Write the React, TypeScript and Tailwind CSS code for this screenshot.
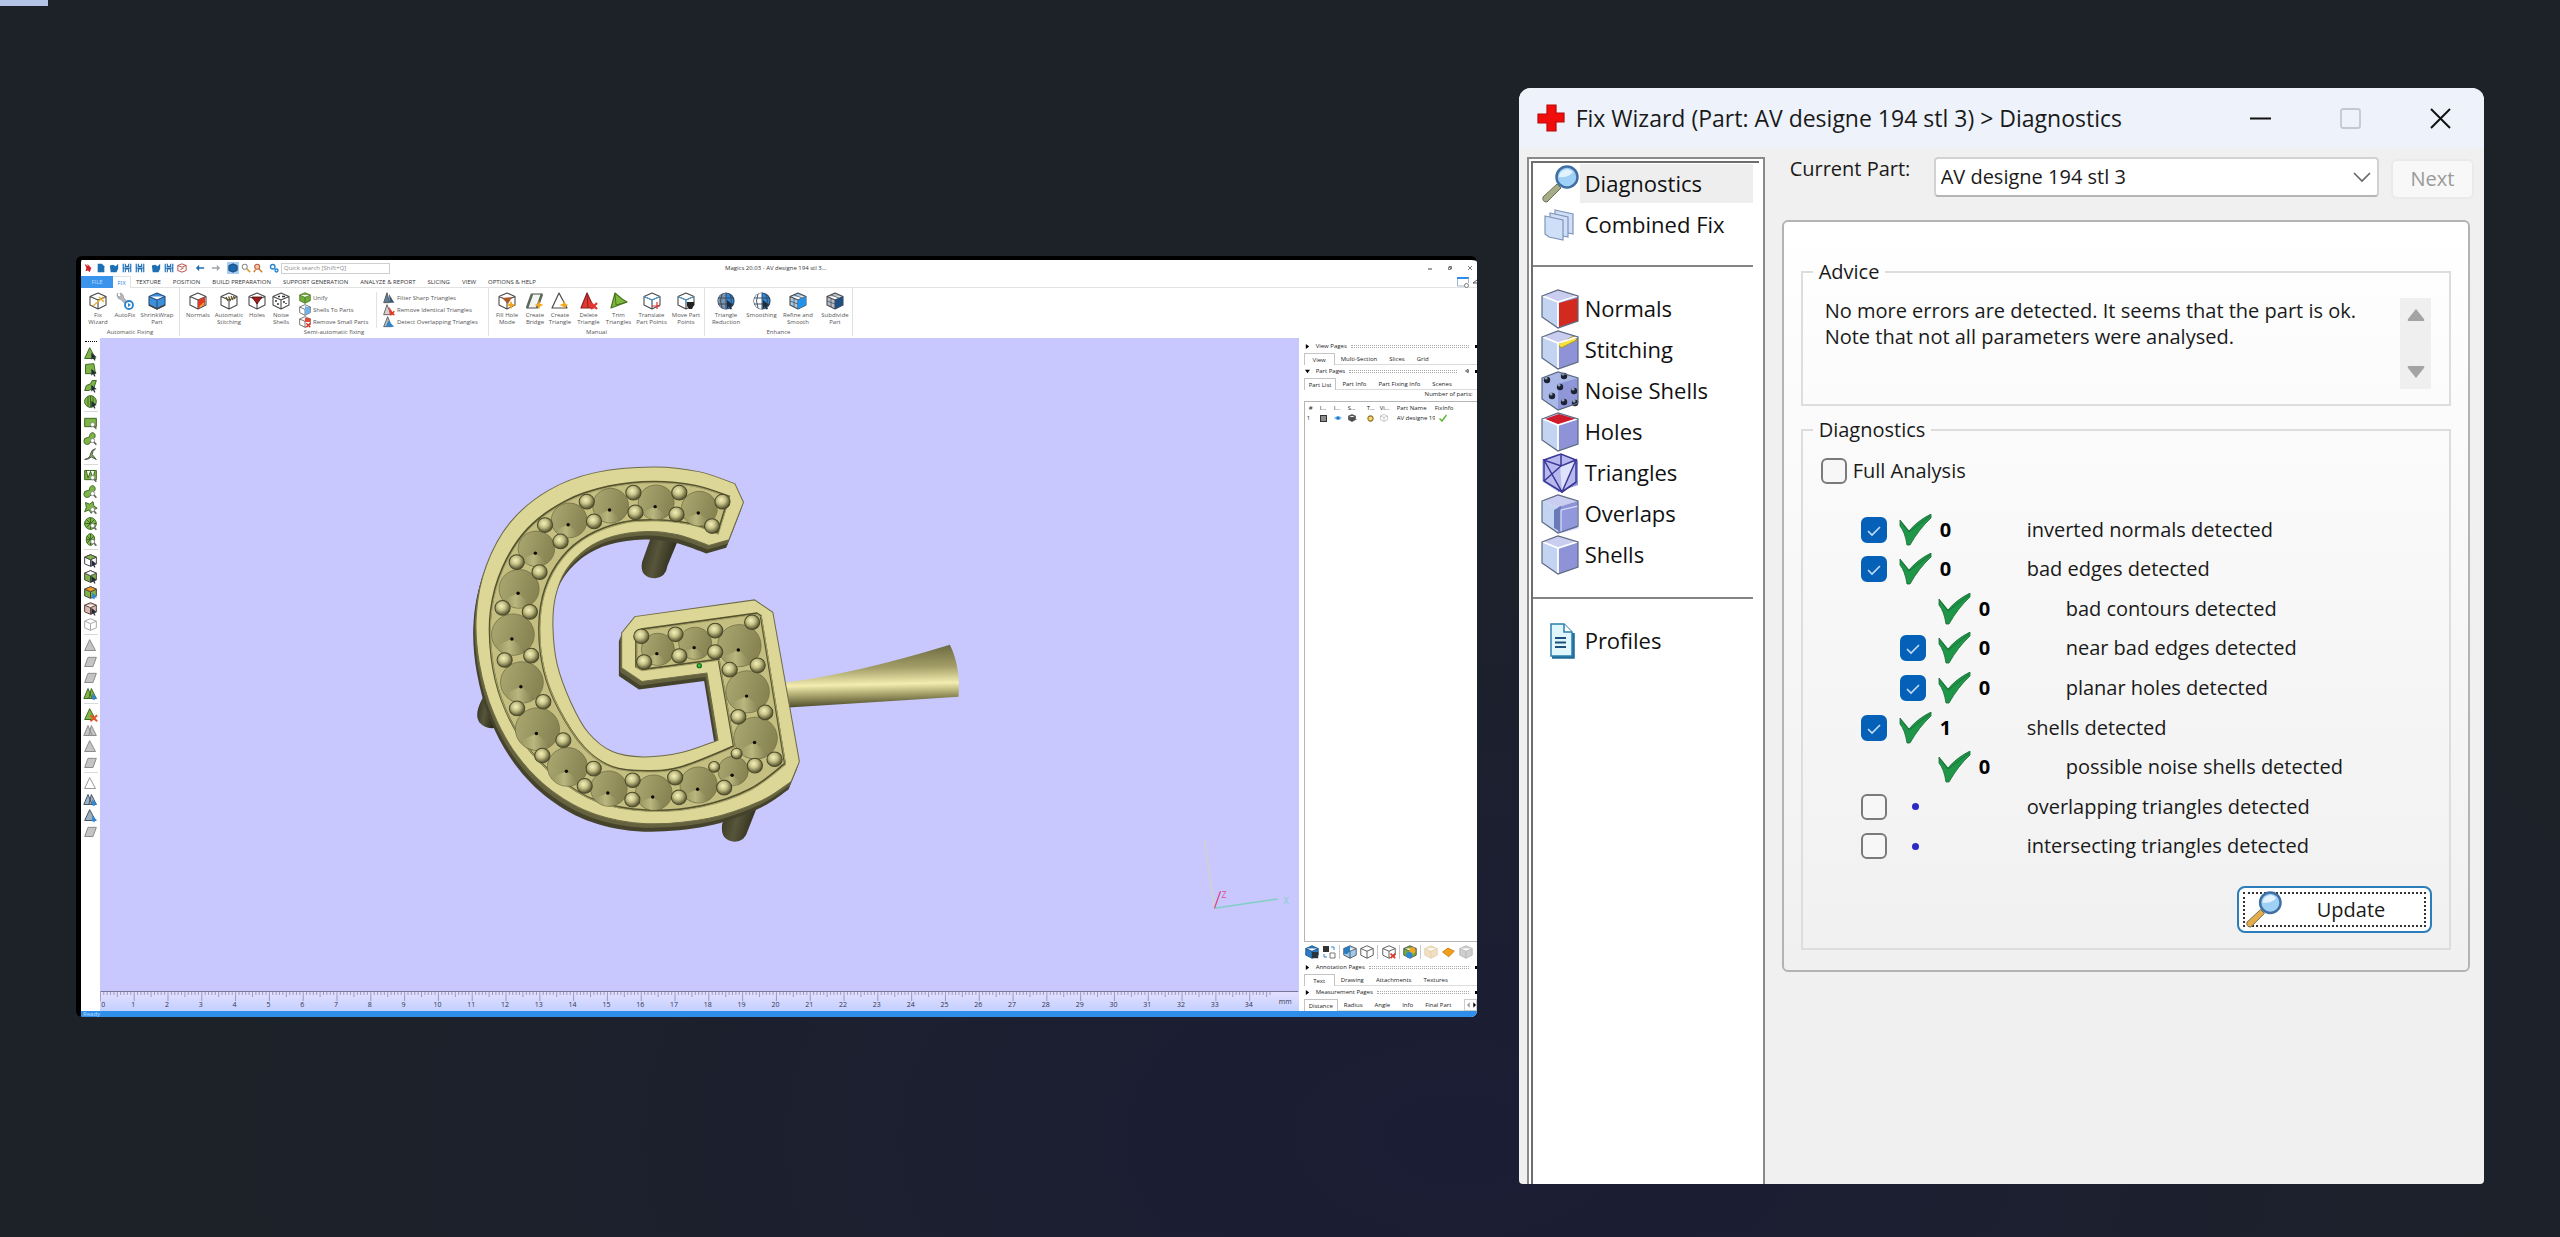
import { useState } from "react";
import type { ReactNode } from "react";

/* ---------- helpers ---------- */

type Pt = [number, number];

// Catmull-Rom through the given points, returned as cubic segments
function spline(points: Pt[]) {
  let d = "";
  for (let i = 0; i < points.length - 1; i++) {
    const p0 = points[i - 1] ?? points[i];
    const p1 = points[i];
    const p2 = points[i + 1];
    const p3 = points[i + 2] ?? p2;
    d += `C${p1[0] + (p2[0] - p0[0]) / 6} ${p1[1] + (p2[1] - p0[1]) / 6} ${p2[0] - (p3[0] - p1[0]) / 6} ${p2[1] - (p3[1] - p1[1]) / 6} ${p2[0]} ${p2[1]}`;
  }
  return d;
}

const FACE =
  "M855 130L880 186L838 298L780 315" +
  spline([[780, 315], [690, 283], [600, 273], [500, 288], [425, 325], [365, 390], [335, 470], [328, 560], [340, 670], [380, 785], [430, 875], [500, 932], [590, 948], [700, 935], [806, 898]]) +
  "L774 697L585 722L527 682L527 577L565 528L912 478L965 515L1042 962L1018 1022" +
  spline([[1018, 1022], [930, 1080], [780, 1132], [600, 1148], [450, 1120], [325, 1050], [225, 945], [155, 815], [115, 670], [106, 520], [135, 375], [205, 245], [315, 150], [450, 97], [620, 80], [750, 94], [855, 130]]) +
  "Z";

const CHANNEL =
  "M838 168L805 278" +
  spline([[805, 278], [730, 251], [630, 239], [530, 246], [430, 285], [355, 350], [305, 445], [288, 560], [302, 690], [345, 805], [420, 922], [500, 978], [600, 990], [700, 978], [852, 916]]) +
  "L808 656L585 687L569 678L569 580L585 566L918 518L930 526L1000 968" +
  spline([[1000, 968], [900, 1044], [760, 1094], [600, 1108], [455, 1080], [335, 1005], [240, 900], [180, 780], [150, 650], [148, 510], [183, 380], [255, 265], [365, 182], [490, 138], [620, 124], [740, 136], [838, 168]]) +
  "Z";

const STONES: [number, number, number][] = [
  [495, 196, 52], [627, 186, 52], [752, 205, 52], [375, 240, 52], [280, 325, 53],
  [230, 445, 58], [212, 582, 62], [238, 725, 62], [283, 865, 64], [370, 978, 58],
  [490, 1043, 53], [620, 1055, 53], [750, 1032, 54], [850, 990, 44], [915, 892, 63],
  [892, 753, 63], [868, 615, 63], [740, 608, 48], [632, 626, 48],
];

const BEADS: [number, number, number?][] = [
  [561, 157], [694, 157], [819, 184], [789, 257], [686, 222], [567, 216], [426, 184],
  [447, 243], [305, 254], [350, 303], [223, 365], [289, 395], [182, 502], [261, 514],
  [188, 658], [265, 645], [224, 803], [300, 783], [297, 944], [358, 898], [420, 1035],
  [446, 983], [559, 1018], [558, 1076], [682, 1010], [693, 1069], [795, 978, 16],
  [824, 1040], [860, 938, 16], [913, 974], [970, 955], [943, 815], [865, 828],
  [840, 687], [921, 674], [905, 545], [798, 570], [798, 634], [683, 581], [694, 646],
  [584, 587], [592, 664],
];

function Viewport() {
  return (
    <svg viewBox="0 0 1196 652" className="block h-auto w-full bg-[#c8c8ff]" role="img" aria-label="Part view">
      <defs>
        <radialGradient id="bead" cx="0.42" cy="0.38" r="0.62">
          <stop offset="0" stopColor="#f4f0bd" />
          <stop offset="0.45" stopColor="#c6c286" />
          <stop offset="1" stopColor="#4f4d2c" />
        </radialGradient>
        <linearGradient id="stone" x1="0" y1="0" x2="1" y2="0.25">
          <stop offset="0" stopColor="#aca871" />
          <stop offset="0.5" stopColor="#9b9763" />
          <stop offset="1" stopColor="#898553" />
        </linearGradient>
        <linearGradient id="stoneLow" x1="0" y1="0" x2="1" y2="0">
          <stop offset="0" stopColor="#9a9662" />
          <stop offset="0.45" stopColor="#bab67e" />
          <stop offset="1" stopColor="#7f7b4d" />
        </linearGradient>
        <linearGradient id="spike" x1="0" y1="0" x2="0.06" y2="1">
          <stop offset="0.05" stopColor="#6b683f" />
          <stop offset="0.4" stopColor="#a39e67" />
          <stop offset="0.66" stopColor="#f3edb0" />
          <stop offset="0.82" stopColor="#a7a26a" />
          <stop offset="1" stopColor="#4f4c2c" />
        </linearGradient>
        <linearGradient id="post" x1="0" y1="0" x2="1" y2="0.3">
          <stop offset="0" stopColor="#33311f" />
          <stop offset="0.5" stopColor="#57553a" />
          <stop offset="1" stopColor="#2b2a1a" />
        </linearGradient>
      </defs>
      <g transform="translate(339 102) scale(0.3444 0.3333)">
        <path d="M612 290L586 365Q578 412 625 413Q655 410 660 375L690 300Z" fill="url(#post)" />
        <path d="M832 1110L818 1150Q812 1200 855 1202Q885 1200 892 1170L930 1070Z" fill="url(#post)" />
        <path d="M125 770Q98 820 115 845Q135 868 165 860Z" fill="url(#post)" />
        <path d="M1000 725Q1200 700 1478 612Q1510 680 1503 768Q1250 785 1010 800Z" fill="url(#spike)" />
        {[24, 18, 12, 6].map((n) => (
          <path key={n} d={FACE} transform={`translate(${-n / 3} ${n})`} fill={n > 12 ? "#45432b" : "#65623f"} />
        ))}
        <path d={FACE} fill="#dcd796" stroke="#6f6c48" strokeWidth="3" />
        <path d={CHANNEL} fill="#c4bf80" stroke="#55522f" strokeWidth="6" />
        <path d={CHANNEL} fill="none" stroke="#a39f66" strokeWidth="3" transform="translate(2 3)" />
        {STONES.map(([x, y, r]) => (
          <g key={`${x}-${y}`}>
            <circle cx={x} cy={y} r={r} fill="url(#stone)" stroke="#6a6740" strokeWidth="2" />
            <path d={`M${x - 3} ${y + 13}L${x - r * 0.8} ${y + r * 0.56}A${r} ${r} 0 0 0 ${x + r * 0.6} ${y + r * 0.78}Z`} fill="url(#stoneLow)" />
            <circle cx={x - 3} cy={y + 13} r="5" fill="#0c0c04" />
          </g>
        ))}
        {BEADS.map(([x, y, r = 22]) => (
          <circle key={`${x}-${y}`} cx={x} cy={y} r={r} fill="url(#bead)" stroke="#4c4a2b" strokeWidth="3" />
        ))}
        <circle cx="752" cy="675" r="6" fill="#4fb84a" stroke="#14781a" strokeWidth="4" />
      </g>
      <path d="M1112 569L1102 501" stroke="#d0d0d6" strokeWidth="2" />
      <path d="M1112 569L1175 559.700" stroke="#7fcfc2" strokeWidth="1.400" />
      <path d="M1112 569L1118 552" stroke="#d8457f" strokeWidth="1.200" />
      <text x="1119" y="559" className="fill-[#e0568c] font-['Open_Sans',sans-serif] text-[9px]">Z</text>
      <text x="1181" y="565" className="fill-[#7fd0c4] font-['Open_Sans',sans-serif] text-[9px]">X</text>
    </svg>
  );
}

function Ruler() {
  const unit = 33.75;
  const ticks = Array.from({ length: 347 }, (_, i) => i);
  const marks = Array.from({ length: 35 }, (_, i) => i);
  return (
    <svg viewBox="0 0 1196 20" className="block h-auto w-full bg-linear-to-b from-[#e6e0ff] to-[#c2d0ff]" role="img" aria-label="Ruler">
      <path d="M0 0.500H1196" stroke="#77779a" />
      <path
        d={ticks.map((i) => `M${i * (unit / 10)} 1V${i % 10 === 0 ? 10 : i % 5 === 0 ? 6 : 4}`).join("")}
        stroke="#7c7ca4"
        strokeWidth="0.700"
      />
      {marks.map((n) => (
        <text key={n} x={n === 0 ? 3 : n * unit - 1} y="16" textAnchor="middle" className="fill-[#33334d] font-['Open_Sans',sans-serif] text-[7px]">
          {n}
        </text>
      ))}
      <text x="1183" y="13" textAnchor="middle" className="fill-[#33334d] font-['Open_Sans',sans-serif] text-[7px]">mm</text>
    </svg>
  );
}

/* ---------- ribbon icons ---------- */

const CUBE = "M9 1L17 4.500V13L9 17L1 13V4.500ZM1 4.500L9 8L17 4.500M9 8V17";

function CubeIcon({ children, fill = "#fff", stroke = "#4a4a4a", size = "size-4.5" }: { children?: ReactNode; fill?: string; stroke?: string; size?: string }) {
  return (
    <svg viewBox="0 0 18 18" className={`${size} shrink-0`} aria-hidden="true">
      <path d={CUBE} fill={fill} stroke={stroke} strokeWidth="1.100" strokeLinejoin="round" />
      {children}
    </svg>
  );
}

function TriIcon({ fill = "#fff", stroke = "#4a4a4a", d = "M9 1L17 16H2Z", size = "size-4.5", children }: { fill?: string; stroke?: string; d?: string; size?: string; children?: ReactNode }) {
  return (
    <svg viewBox="0 0 18 18" className={`${size} shrink-0`} aria-hidden="true">
      <path d={d} fill={fill} stroke={stroke} strokeWidth="1.200" strokeLinejoin="round" />
      {children}
    </svg>
  );
}

const spark = <path d="M13 8.500L14.200 11.800L17.500 13L14.200 14.200L13 17.500L11.800 14.200L8.500 13L11.800 11.800Z" fill="#f2a71b" />;
const cursor = <path d="M10 8L16.500 13.500L13.500 13.800L15 17L13.500 17.500L12 14.500L10 16.500Z" fill="#222c3a" />;
const cross = <path d="M11 11L17 17M17 11L11 17" stroke="#e2372b" strokeWidth="2.200" />;
const magnify = (
  <g>
    <path d="M12.500 12.500L16 16.500" stroke="#666" strokeWidth="2" />
    <circle cx="11.500" cy="11.500" r="2.500" fill="#fff" stroke="#888" />
  </g>
);

type Tool = { label: string[]; icon: ReactNode; width: string };

const AUTO_TOOLS: Tool[] = [
  { label: ["Fix", "Wizard"], width: "w-8", icon: <CubeIcon><path d="M4 14L12 7M10 5L15 10M13 5L15 7" stroke="#e8b33a" strokeWidth="1.500" /></CubeIcon> },
  {
    label: ["AutoFix"],
    width: "w-[22px]",
    icon: (
      <svg viewBox="0 0 18 18" className="size-4.5" aria-hidden="true">
        <path d="M2 1A4 4 0 0 0 5 7.500L10 13L12 11L7.500 5.500A4 4 0 0 0 4 1L5 3.500L3 5L1 3Z" fill="#b5b8bc" stroke="#8b8e92" strokeWidth="0.600" />
        <circle cx="13" cy="13" r="4" fill="#fff" stroke="#2684cf" strokeWidth="1.800" />
        <path d="M12 11L15 13L12 15Z" fill="#2684cf" />
      </svg>
    ),
  },
  { label: ["ShrinkWrap", "Part"], width: "w-[42px]", icon: <CubeIcon fill="#3d8fd9" stroke="#254f80"><path d="M1 13L9 17L17 13" fill="none" stroke="#444" strokeWidth="1.500" /></CubeIcon> },
];

const SEMI_TOOLS: Tool[] = [
  { label: ["Normals"], width: "w-[34px]", icon: <CubeIcon><path d="M9 8L16 5V12.500L9 16.500Z" fill="#de3b26" /><path d="M11 15L15 11" stroke="#f0b030" strokeWidth="1.500" /></CubeIcon> },
  { label: ["Automatic", "Stitching"], width: "w-7", icon: <CubeIcon><path d="M6 5L8 9M8.500 4.500L10.500 9M11 4L13 8M13.500 4L15 7" stroke="#5f5522" strokeWidth="1.300" /></CubeIcon> },
  { label: ["Holes"], width: "w-7", icon: <CubeIcon><path d="M4 5L14 5L9 12Z" fill="#a01c1c" stroke="#4d1010" strokeWidth="0.800" /></CubeIcon> },
  { label: ["Noise", "Shells"], width: "w-5", icon: <CubeIcon><path d="M6 4.500H8M10 4.500H13M4 8V10M6 11V13M12 9V11M14 11V12" stroke="#333" strokeWidth="1.500" /></CubeIcon> },
];

const MANUAL_TOOLS: Tool[] = [
  { label: ["Fill Hole", "Mode"], width: "w-[34px]", icon: <CubeIcon><path d="M4 6L14 5L10 12Z" fill="#a85a2b" />{spark}</CubeIcon> },
  { label: ["Create", "Bridge"], width: "w-[22px]", icon: <TriIcon d="M6 2H16L11 16H1Z" fill="#f4f4f4"><path d="M6 2L1 16M16 2L11 16" stroke="#5b6a58" strokeWidth="2.500" />{spark}</TriIcon> },
  { label: ["Create", "Triangle"], width: "w-7", icon: <TriIcon d="M8 1L16 16H1Z">{spark}</TriIcon> },
  { label: ["Delete", "Triangle"], width: "w-[29px]", icon: <TriIcon d="M7 1L14 16H1Z" fill="#e23a32" stroke="#8f2222"><path d="M7 1L8 16" stroke="#8f2222" />{cross}</TriIcon> },
  { label: ["Trim", "Triangles"], width: "w-[31px]", icon: <TriIcon d="M5 1L12 7L17 10L1 16Z" fill="#7dba3c" stroke="#4b7422"><path d="M5 1L6 13L17 10" fill="none" stroke="#4b7422" /></TriIcon> },
  { label: ["Translate", "Part Points"], width: "w-[35px]", icon: <CubeIcon><path d="M1 4.500L9 8L17 4.500M9 8V12" fill="none" stroke="#4ba3dd" /><path d="M9 14H17M14 10V17" stroke="#d33" strokeWidth="1.200" /></CubeIcon> },
  { label: ["Move Part", "Points"], width: "w-[34px]", icon: <CubeIcon><path d="M1 4.500L9 8L17 4.500M9 8V12" fill="none" stroke="#4ba3dd" /><path d="M10 10H17V13L15 17H12L10 14Z" fill="#222" /></CubeIcon> },
];

function Globe({ left }: { left: string }) {
  return (
    <svg viewBox="0 0 18 18" className="size-4.5" aria-hidden="true">
      <circle cx="9" cy="9" r="8" fill="#2d87d4" stroke="#33475e" strokeWidth="1.200" />
      <path d="M9 1A8 8 0 0 0 9 17Z" fill={left} />
      <path d="M1 6H17M1 12H17M9 1V17M5 2Q2 9 5 16M13 2Q16 9 13 16" fill="none" stroke="#33475e" strokeWidth="0.900" />
      {cursor}
    </svg>
  );
}

const ENHANCE_TOOLS: Tool[] = [
  { label: ["Triangle", "Reduction"], width: "w-10", icon: <Globe left="#7d93a8" /> },
  { label: ["Smoothing"], width: "w-[31px]", icon: <Globe left="#ffffff" /> },
  { label: ["Refine and", "Smooth"], width: "w-[42px]", icon: <CubeIcon fill="#a9c8e2"><path d="M9 8L17 4.500V13L9 17Z" fill="#2492e8" /><path d="M1 9L9 12M5 6.500V15M5 3L13 6" stroke="#456" strokeWidth="0.800" /></CubeIcon> },
  { label: ["Subdivide", "Part"], width: "w-8", icon: <CubeIcon fill="#b9bfc5"><path d="M9 8L17 4.500V13L9 17Z" fill="#204f85" /><path d="M1 9L9 12M5 6.500V15M5 3L13 6" stroke="#456" strokeWidth="0.800" /></CubeIcon> },
];

function ToolButton({ label, icon, width }: Tool) {
  return (
    <button type="button" className={`flex shrink-0 flex-col items-center gap-0.5 ${width}`}>
      {icon}
      <span className="flex flex-col items-center whitespace-nowrap">
        {label.map((line) => (
          <span key={line}>{line}</span>
        ))}
      </span>
    </button>
  );
}

function SmallTool({ label, icon }: { label: string; icon: ReactNode }) {
  return (
    <button type="button" className="flex h-3 items-center gap-0.5 whitespace-nowrap">
      {icon}
      {label}
    </button>
  );
}

function RibbonGroup({ title, children }: { title: string; children: ReactNode }) {
  return (
    <div className="flex shrink-0 flex-col justify-between border-r border-[#e2e2e2] px-px pt-1">
      <div className="flex h-9">{children}</div>
      <div className="text-center leading-2">{title}</div>
    </div>
  );
}

/* ---------- quick access bar ---------- */

function FileGlyph({ kind }: { kind: string }) {
  const blue = "#1f6fb5";
  return (
    <svg viewBox="0 0 12 12" className="size-2.5 shrink-0" aria-hidden="true">
      {kind === "logo" && <path d="M2 1L6 4L5 1L10 6L8 11L6 9L3 10L4 6Z" fill="#cf2530" />}
      {kind === "new" && <path d="M2 1H7L10 4V11H2Z" fill={blue} />}
      {kind === "open" && <path d="M1 3L5 2L8 4L11 1V7L9 11H2Z" fill={blue} />}
      {kind === "save" && <path d="M1.500 1V11M10.500 1V11M4 1V4H8V1M4 11V7H8V11M1 6H11" fill="none" stroke={blue} strokeWidth="1.400" />}
      {kind === "drop" && <path d="M6 1L11 3V9L6 11L1 9V3ZM1 3L6 5L11 3M4 8L8 6" fill="#fff" stroke="#b0483e" strokeWidth="1.100" />}
      {kind === "undo" && <path d="M1 6L5 2V5H11V7H5V10Z" fill={blue} />}
      {kind === "redo" && <path d="M11 6L7 2V5H1V7H7V10Z" fill="#a3a8ad" />}
      {kind === "view" && <path d="M1 3L6 1L11 3V9L6 11L1 9Z" fill="#1b66ad" stroke="#123f6d" />}
      {kind === "zoom" && (
        <g>
          <circle cx="4.500" cy="4.500" r="3" fill="#fff" stroke="#8e8e8e" strokeWidth="1.300" />
          <path d="M7 7L11 11" stroke="#e0a030" strokeWidth="2" />
        </g>
      )}
      {kind === "zoomRed" && (
        <g>
          <circle cx="5" cy="4.500" r="3" fill="#f6c7a6" stroke="#b55a3c" strokeWidth="1.300" />
          <path d="M7 7L11 11M3 8L1 11" stroke="#d08030" strokeWidth="1.800" />
        </g>
      )}
      {kind === "gears" && (
        <g fill="#fff" stroke="#2684cf" strokeWidth="1.600">
          <circle cx="4.500" cy="4.500" r="2.700" />
          <circle cx="9" cy="9" r="1.800" />
        </g>
      )}
    </svg>
  );
}

const QUICK = ["logo", "new", "open", "save", "save"];
const QUICK_2 = ["open", "save", "drop"];

const TABS = [
  "TEXTURE", "POSITION", "BUILD PREPARATION", "SUPPORT GENERATION",
  "ANALYZE & REPORT", "SLICING", "VIEW", "OPTIONS & HELP",
];

function TitleRow() {
  return (
    <div className="flex h-4 items-center pl-0.5">
      <div className="flex items-center gap-[3px]">
        {QUICK.map((k, i) => <FileGlyph key={i} kind={k} />)}
      </div>
      <div className="ml-1.5 flex items-center gap-[3px]">
        {QUICK_2.map((k, i) => <FileGlyph key={i} kind={k} />)}
      </div>
      <div className="ml-2 flex items-center gap-1.5">
        <FileGlyph kind="undo" />
        <FileGlyph kind="redo" />
      </div>
      <div className="ml-1.5 flex items-center gap-0.5">
        <span className="flex size-3 items-center justify-center bg-[#a9cdee]"><FileGlyph kind="view" /></span>
        <FileGlyph kind="zoom" />
        <FileGlyph kind="zoomRed" />
      </div>
      <div className="ml-1.5 flex items-center gap-0.5">
        <FileGlyph kind="gears" />
        <input
          aria-label="Quick search"
          placeholder="Quick search [Shift+Q]"
          className="h-[11px] w-[109px] border border-[#cfcfcf] bg-white px-0.5 placeholder:text-[#8a8a8a]"
        />
      </div>
      <div className="flex-1 pl-[335px] whitespace-nowrap">Magics 20.03 - AV designe 194 stl 3...</div>
      <div className="flex items-center gap-4 pr-[5px] text-[#444]">
        <button type="button" aria-label="Minimize"><svg viewBox="0 0 4 4" className="size-1"><path d="M0 3H4" stroke="currentColor" /></svg></button>
        <button type="button" aria-label="Restore"><svg viewBox="0 0 4 4" className="size-1"><path d="M1 1V0.500H3.500V3H3M0.500 1.500H2.500V3.500H0.500Z" fill="none" stroke="currentColor" strokeWidth="0.700" /></svg></button>
        <button type="button" aria-label="Close"><svg viewBox="0 0 4 4" className="size-1"><path d="M0 0L4 4M4 0L0 4" stroke="currentColor" strokeWidth="0.700" /></svg></button>
      </div>
    </div>
  );
}

function TabRow() {
  return (
    <div className="flex h-3 items-stretch leading-3 text-[#333]">
      <button type="button" className="w-8 bg-[#3a94ec] text-[#b8dcff]">FILE</button>
      <button type="button" className="w-[18px] border-t border-r border-[#e2e2e2] text-[#2f8ae8]">FIX</button>
      <div className="flex flex-1 items-center gap-3 border-b border-[#e2e2e2] pt-px pl-[5px]">
        {TABS.map((tab) => (
          <button key={tab} type="button" className="whitespace-nowrap">{tab}</button>
        ))}
      </div>
      <div className="flex items-center gap-1 border-b border-[#e2e2e2]">
        <svg viewBox="0 0 12 12" className="size-3" aria-hidden="true">
          <path d="M0.500 1V10H7" fill="none" stroke="#9fb6cc" />
          <path d="M0 1H12V3H0Z" fill="#2f8ae8" />
          <path d="M11.500 2V7" stroke="#9fb6cc" />
          <circle cx="9.500" cy="9.500" r="2" fill="#fff" stroke="#777" />
        </svg>
        <svg viewBox="0 0 4 6" className="h-1.5 w-1" aria-hidden="true"><path d="M0 4L4 1M0 4H4" fill="none" stroke="#555" /></svg>
      </div>
    </div>
  );
}

function Ribbon() {
  return (
    <div className="flex h-[50px] pb-0.5 leading-[7px] text-[#555]">
      <RibbonGroup title="Automatic Fixing">
        {AUTO_TOOLS.map((t) => <ToolButton key={t.label.join()} {...t} />)}
      </RibbonGroup>
      <RibbonGroup title="Semi-automatic fixing">
        {SEMI_TOOLS.map((t) => <ToolButton key={t.label.join()} {...t} />)}
        <div className="ml-2 w-[78px] border-r border-[#e2e2e2]">
          <SmallTool label="Unify" icon={<CubeIcon size="size-3" fill="#6fae3a" stroke="#446e1f" />} />
          <SmallTool label="Shells To Parts" icon={<CubeIcon size="size-3"><path d="M9 3L17 6V13L9 16Z" fill="#6fb1e8" /></CubeIcon>} />
          <SmallTool label="Remove Small Parts" icon={<CubeIcon size="size-3">{cross}<path d="M9 3H17V9H9Z" fill="#e2483b" /></CubeIcon>} />
        </div>
        <div className="ml-1.5 w-[104px]">
          <SmallTool label="Filter Sharp Triangles" icon={<TriIcon size="size-3" fill="#5f7d94" d="M6 1L10 16H1Z"><path d="M9 3L17 16H10Z" fill="#375a78" /></TriIcon>} />
          <SmallTool label="Remove Identical Triangles" icon={<TriIcon size="size-3" fill="#d9cfcf" d="M6 1L12 16H1Z"><path d="M9 4L17 16H10Z" fill="#de4338" />{cross}</TriIcon>} />
          <SmallTool label="Detect Overlapping Triangles" icon={<TriIcon size="size-3" fill="#b4bdc5" d="M7 1L13 16H1Z"><path d="M8 7L17 16H4Z" fill="#3582c9" /></TriIcon>} />
        </div>
      </RibbonGroup>
      <RibbonGroup title="Manual">
        {MANUAL_TOOLS.map((t) => <ToolButton key={t.label.join()} {...t} />)}
      </RibbonGroup>
      <RibbonGroup title="Enhance">
        {ENHANCE_TOOLS.map((t) => <ToolButton key={t.label.join()} {...t} />)}
      </RibbonGroup>
    </div>
  );
}

/* ---------- marking tool strip ---------- */

const GREEN = "#7fb548";
const DARK_GREEN = "#3f6a24";

const SHAPES: Record<string, string> = {
  tri: "M8 2L15 15H2Z",
  quad: "M3 3L13 2L15 14H3Z",
  bend: "M2 15L4 9L9 7L11 3H16L13 12L7 15Z",
  disc: "M9 2A7 7 0 1 1 8.900 2ZM6 3V15M9 2V16M12 3V15",
  rect: "M2 4H16V14H2Z",
  blob: "M12 2A4 4 0 0 1 13 9L9 11A4 4 0 1 1 5 8L8 7A4 4 0 0 1 12 2Z",
  branch: "M2 15Q9 13 9 8Q10 3 15 2Q11 5 11 9L16 15L10 12Q7 15 2 15Z",
  wave: "M2 3H16V14H2ZM4 3L6 12L9 4L12 12L14 4",
  star: "M3 3L8 5L12 2L13 7L17 10L12 12L10 16L7 12L2 14L4 9Z",
  wheel: "M9 2A7 7 0 1 1 8.900 2ZM9 2V16M2 9H16M4 4L14 14M14 4L4 14",
  oval: "M9 2A5 7 0 1 1 8.900 2ZM9 2V16M4 9H14M5 5L13 13M13 5L5 13",
  cube: "M9 2L16 5V13L9 16L2 13V5ZM2 5L9 8L16 5M9 8V16",
  tris: "M6 3L11 15H1ZM10 3L16 15H7Z",
  slant: "M6 4H16L12 15H2Z",
};

type Glyph = { shape: string; fill?: string; stroke?: string; mark?: "cursor" | "magnify" | "cross" | "blue" | "none"; top?: string };

const GRAY: Partial<Glyph> = { fill: "#c4c4c4", stroke: "#8c8c8c", mark: "none" };

const STRIP: Glyph[][] = [
  [{ shape: "tri" }, { shape: "quad" }, { shape: "bend" }, { shape: "disc" }],
  [{ shape: "rect", mark: "magnify" }, { shape: "blob", mark: "magnify" }, { shape: "branch", mark: "none", stroke: "#555" }],
  [
    { shape: "wave", mark: "magnify" }, { shape: "blob", mark: "magnify" }, { shape: "star", mark: "magnify" },
    { shape: "wheel", mark: "magnify" }, { shape: "oval", mark: "magnify" },
  ],
  [
    { shape: "cube", fill: "#fff", stroke: "#444", top: GREEN },
    { shape: "cube", stroke: "#444", top: "#fff" },
    { shape: "cube", stroke: "#444", top: "#f39a1e", mark: "blue" },
    { shape: "cube", fill: "#d8bcb4", stroke: "#5d4037" },
    { shape: "cube", fill: "#fff", stroke: "#aaa", mark: "none" },
  ],
  [
    { shape: "tri", ...GRAY }, { shape: "slant", ...GRAY }, { shape: "slant", ...GRAY },
    { shape: "tris", mark: "blue" },
  ],
  [
    { shape: "tri", mark: "cross" }, { shape: "tris", ...GRAY }, { shape: "tri", ...GRAY }, { shape: "slant", ...GRAY },
  ],
  [
    { shape: "tri", fill: "#fff", stroke: "#999", mark: "none" },
    { shape: "tris", fill: "#9db4c6", stroke: "#456", mark: "blue" },
    { shape: "tri", fill: "#9fb0bd", stroke: "#456", mark: "blue" },
    { shape: "slant", ...GRAY },
  ],
];

function StripIcon({ shape, fill = GREEN, stroke = DARK_GREEN, mark = "cursor", top }: Glyph) {
  return (
    <svg viewBox="0 0 18 18" className="size-[15px]" aria-hidden="true">
      <path d={SHAPES[shape]} fill={fill} stroke={stroke} strokeWidth="1.200" strokeLinejoin="round" />
      {top && <path d="M9 2L16 5L9 8L2 5Z" fill={top} stroke={stroke} />}
      {mark === "cursor" && cursor}
      {mark === "magnify" && magnify}
      {mark === "cross" && <path d="M9 10L17 17M17 10L9 17" stroke="#e8562a" strokeWidth="2.500" />}
      {mark === "blue" && <path d="M11 16V9L17 15L14 15V17Z" fill="#2f86d6" />}
    </svg>
  );
}

function ToolStrip() {
  return (
    <div className="flex w-[19px] shrink-0 flex-col items-center bg-white pt-[3px]">
      <div className="h-1 w-3 border-t border-dotted border-black" />
      {STRIP.map((group, i) => (
        <div key={i} className="flex flex-col items-center">
          {i > 0 && <div className="my-0.5 h-px w-3.5 bg-[#d9d9d9]" />}
          {group.map((g, j) => (
            <button key={j} type="button" aria-label={`Marking tool ${i + 1}.${j + 1}`} className="flex size-4 items-center justify-center">
              <StripIcon {...g} />
            </button>
          ))}
        </div>
      ))}
    </div>
  );
}

/* ---------- docked pages ---------- */

function PageHeader({ title, open, pin }: { title: string; open?: boolean; pin?: boolean }) {
  return (
    <div className="flex h-3 items-center gap-1 pl-[5px]">
      <svg viewBox="0 0 6 6" className="mr-0.5 size-[5px]" aria-hidden="true">
        <path d={open ? "M0 1H6L3 5Z" : "M1 0L5 3L1 6Z"} fill="#000" />
      </svg>
      <span className="whitespace-nowrap">{title}</span>
      <span className="h-[3px] flex-1 border-y border-dotted border-[#aaa]" />
      {pin && <svg viewBox="0 0 6 6" className="ml-1 size-1" aria-hidden="true"><path d="M0 3H3M3 1V5H5V1Z" fill="none" stroke="#222" /></svg>}
      <span className="ml-0.5 h-[3px] w-0.5 bg-black" />
    </div>
  );
}

function PageTabs({ tabs, children }: { tabs: string[]; children?: ReactNode }) {
  const [first, ...rest] = tabs;
  return (
    <div className="flex h-[13px] items-end pl-1">
      <button type="button" className="h-3 min-w-[31px] border-x border-t border-[#c4c4c4] px-1 whitespace-nowrap">{first}</button>
      <div className="flex h-3 flex-1 items-center gap-3 border-b border-[#dcdcdc] pl-1.5">
        {rest.map((t) => (
          <button key={t} type="button" className="whitespace-nowrap">{t}</button>
        ))}
      </div>
      {children}
    </div>
  );
}

function PartTable() {
  return (
    <table className="w-full table-fixed text-left leading-[10px]">
      <thead>
        <tr>
          <th className="w-[15px] pl-1 font-normal">#</th>
          <th className="w-3.5 font-normal">I...</th>
          <th className="w-3.5 font-normal">I...</th>
          <th className="w-[19px] font-normal">S...</th>
          <th className="w-[13px] font-normal">T...</th>
          <th className="w-[17px] font-normal">Vi...</th>
          <th className="w-[38px] font-normal">Part Name</th>
          <th className="font-normal">FixInfo</th>
        </tr>
      </thead>
      <tbody>
        <tr>
          <td className="pl-0.5">1</td>
          <td>
            <input type="checkbox" defaultChecked aria-label="Select part 1" className="block size-[7px] appearance-none border border-[#333] checked:bg-[#8c8c8c]" />
          </td>
          <td><svg viewBox="0 0 8 6" className="h-1.5 w-2" aria-hidden="true"><path d="M0 3Q4 -1 8 3Q4 7 0 3Z" fill="#7ec0f2" /><circle cx="4" cy="3" r="1.600" fill="#1877c9" /></svg></td>
          <td className="whitespace-nowrap"><CubeIcon size="inline size-2" fill="#555" stroke="#333" />.</td>
          <td><svg viewBox="0 0 8 8" className="size-[7px]" aria-hidden="true"><circle cx="4" cy="4" r="3" fill="#f5d77a" stroke="#8a6d1c" strokeWidth="1.200" /></svg></td>
          <td><CubeIcon size="inline size-2" stroke="#999" /></td>
          <td className="overflow-hidden whitespace-nowrap">AV designe 19</td>
          <td><svg viewBox="0 0 8 8" className="ml-1 size-2" aria-hidden="true"><path d="M0.500 4.500L3 7L7.500 1" fill="none" stroke="#5cb531" strokeWidth="1.500" /></svg></td>
        </tr>
      </tbody>
    </table>
  );
}

function BarDivider() {
  return <span className="h-3.5 w-px bg-[#c8c8c8]" />;
}

function PagesPanel() {
  return (
    <div className="flex w-[178px] shrink-0 flex-col overflow-hidden bg-white pt-0.5 pl-px leading-3 text-[#222]">
      <PageHeader title="View Pages" />
      <PageTabs tabs={["View", "Multi-Section", "Slices", "Grid"]} />
      <PageHeader title="Part Pages" open pin />
      <PageTabs tabs={["Part List", "Part Info", "Part Fixing Info", "Scenes"]} />
      <div className="h-2 pr-1 text-right leading-2">Number of parts:</div>
      <div className="mt-[3px] ml-1 flex-1 border-y border-l border-[#b5b5b5] pt-px">
        <PartTable />
      </div>
      <div className="flex h-[19px] items-center justify-between pr-1 pl-[5px]">
        <CubeIcon size="size-3.5" fill="#2c7cc4" stroke="#1b4f80"><path d="M9 9H17V17H9Z" fill="#2a3440" /></CubeIcon>
        <svg viewBox="0 0 14 14" className="size-3.5" aria-hidden="true"><path d="M1 1H7V7H1Z" fill="#333" /><path d="M8 8H13V13H8Z" fill="#fff" stroke="#777" /><path d="M9 2H12V5M2 9V12H5" fill="none" stroke="#2f86d6" /></svg>
        <BarDivider />
        <CubeIcon size="size-3.5" fill="#9fcaee"><path d="M1 4.500L9 1L9 8L5 12L1 11Z" fill="#2c7cc4" /></CubeIcon>
        <CubeIcon size="size-3.5" />
        <BarDivider />
        <CubeIcon size="size-3.5">{cross}</CubeIcon>
        <BarDivider />
        <CubeIcon size="size-3.5" fill="#6fae3a"><circle cx="12" cy="7" r="4" fill="#f0a826" /><circle cx="8" cy="13" r="4" fill="#2f86d6" /></CubeIcon>
        <BarDivider />
        <CubeIcon size="size-3.5" fill="#f3dfc0" stroke="#e2cfb0" />
        <TriIcon size="size-3.5" d="M2 9L9 4L17 8L10 15Z" fill="#f2a01c" stroke="#c97f10" />
        <CubeIcon size="size-3.5" fill="#cfcfcf" stroke="#b5b5b5" />
      </div>
      <PageHeader title="Annotation Pages" />
      <PageTabs tabs={["Text", "Drawing", "Attachments", "Textures"]} />
      <PageHeader title="Measurement Pages" />
      <PageTabs tabs={["Distance", "Radius", "Angle", "Info", "Final Part"]}>
        <button type="button" aria-label="Scroll tabs" className="flex h-3 w-[13px] items-center gap-1 border border-[#ccc] pl-0.5">
          <svg viewBox="0 0 10 6" className="h-1.5 w-2.5"><path d="M3 0L0 3L3 6Z" fill="#999" /><path d="M7 0L10 3L7 6Z" fill="#000" /></svg>
        </button>
      </PageTabs>
    </div>
  );
}

function MagicsWindow() {
  return (
    <section className="mt-[168px] min-w-0 flex-[1398_1_0%] self-start overflow-hidden rounded-md border-t-4 border-l-[5px] border-black bg-white font-['Open_Sans',sans-serif] text-[6px] leading-[7px] text-[#333]">
      <TitleRow />
      <TabRow />
      <Ribbon />
      <div className="flex">
        <ToolStrip />
        <div className="min-w-0 flex-1">
          <Viewport />
          <Ruler />
        </div>
        <PagesPanel />
      </div>
      <div className="h-1.5 overflow-hidden bg-[#2f8eea] pl-0.5 text-[#b9dcff]">Ready</div>
    </section>
  );
}

/* ---------- fix wizard ---------- */

function Magnifier({ handle, className }: { handle: string; className: string }) {
  return (
    <svg viewBox="0 0 38 38" className={className} aria-hidden="true">
      <path d="M2 32L16 19L20 23L6 37Q1 37 2 32Z" fill={handle} stroke="#6b6f5a" strokeWidth="1" />
      <circle cx="26" cy="12" r="10.500" fill="#9fd0f5" stroke="#3f6fa3" strokeWidth="2.500" />
      <path d="M18 12A8 8 0 0 1 32 7Q28 13 18 12Z" fill="#e2f3ff" />
    </svg>
  );
}

function WizardCube({ kind }: { kind: string }) {
  return (
    <svg viewBox="0 0 38 40" className="h-10 w-[38px]" aria-hidden="true">
      <path d="M1 7L17 1L37 7L17 13Z" fill="#c9cdf0" />
      <path d="M1 7L17 13V39L1 28Z" fill="#c3d3f2" />
      <path d="M17 13L37 7V32L17 39Z" fill="#8d93d6" />
      {kind === "normals" && <path d="M18 14L37 9V32L18 38Z" fill="#d32a20" />}
      {kind === "holes" && <path d="M4 7L18 2L35 7L18 13Z" fill="#cf1a2b" />}
      {kind === "stitching" && <path d="M17 14L33 6L36 10L20 18Z" fill="#f7e13c" stroke="#a8922a" strokeWidth="1" />}
      {kind === "noise" && (
        <g>
          <path d="M1 7L17 1L37 7V32L17 39L1 28Z" fill="#a9b8e6" />
          <path d="M17 13L37 7V32L17 39Z" fill="#8f97d8" />
          {[[6, 9], [23, 5], [19, 16], [11, 25], [33, 20], [23, 31], [34, 32]].map(([x, y]) => (
            <g key={`${x}-${y}`}>
              <circle cx={x} cy={y} r="3.200" fill="#1d2233" />
              <circle cx={x - 1} cy={y - 2} r="1.600" fill="#8fa3b8" />
            </g>
          ))}
        </g>
      )}
      {kind === "triangles" && (
        <g>
          <path d="M3 7L20 1L35 7V29L21 39L3 28Z" fill="#b7b9ee" />
          <path d="M19 12L35 7L21 39Z" fill="#dfe2fb" />
          <path d="M3 7L21 39L35 7L20 13ZM3 28L20 13V1M35 29L21 39" fill="none" stroke="#3a3796" strokeWidth="1.500" />
        </g>
      )}
      {kind === "overlaps" && (
        <g>
          <path d="M13 16L20 12V38L13 34Z" fill="#6a7ab8" />
          <path d="M20 16L37 12V34L20 39Z" fill="#9298dc" stroke="#dfe3ff" strokeWidth="1.200" />
        </g>
      )}
      {kind !== "overlaps" && kind !== "triangles" && kind !== "noise" && (
        <path d="M2 7L17 13L36 7M17 13V38" fill="none" stroke="#fff" strokeWidth="1.800" />
      )}
      {kind !== "triangles" && <path d="M1 7L17 1L37 7V32L17 39L1 28Z" fill="none" stroke="#5c6a80" strokeWidth="1.200" />}
      {kind === "triangles" && <path d="M3 7L20 1L35 7V29L21 39L3 28Z" fill="none" stroke="#3a3796" strokeWidth="1.500" />}
    </svg>
  );
}

const sheetsIcon = (
  <svg viewBox="0 0 32 32" className="size-8" aria-hidden="true">
    {[[10, 0], [5, 3], [0, 6]].map(([x, y]) => (
      <path key={x} d={`M${x + 1} ${y + 1}L${x + 19} ${y + 5}V${y + 25}L${x + 5} ${y + 22}L${x + 1} ${y + 19}Z`} fill="#cfdff7" stroke="#7f94b8" strokeWidth="1.200" />
    ))}
  </svg>
);

const profileIcon = (
  <svg viewBox="0 0 26 36" className="ml-1 h-9 w-[26px]" aria-hidden="true">
    <path d="M2 1H15L23 9V33H2Z" fill="#dff6fd" stroke="#2b7fae" strokeWidth="1.500" />
    <path d="M3 34.500H24.500V10" fill="none" stroke="#1c6d9c" strokeWidth="2.500" />
    <path d="M15 1V9H23" fill="#fff" stroke="#2b7fae" strokeWidth="1.500" />
    <path d="M6 15H17M6 19.500H17M6 24H17" stroke="#1d4f7d" strokeWidth="2" />
  </svg>
);

const FIXES = ["Normals", "Stitching", "Noise Shells", "Holes", "Triangles", "Overlaps", "Shells"];
const FIX_KINDS = ["normals", "stitching", "noise", "holes", "triangles", "overlaps", "shells"];

function NavItem({ label, icon, active }: { label: string; icon: ReactNode; active?: boolean }) {
  return (
    <button type="button" className="flex h-[41px] w-full items-center pl-[7px] text-left">
      <span className="flex w-10 items-center justify-center">{icon}</span>
      <span className={`flex h-[39px] flex-1 items-center pb-0.5 pl-[5px] ${active ? "bg-[#eeeeee]" : ""}`}>{label}</span>
    </button>
  );
}

function WizardNav() {
  return (
    <nav className="flex w-[238px] shrink-0 flex-col border-x-2 border-t-2 border-[#8a8a8a] bg-white pt-0.5 pr-1 pl-0.5">
      <div className="flex-1 border-t-2 border-l-2 border-[#6e6e6e] pr-1.5 text-[22px] leading-7 text-[#111]">
        <NavItem label="Diagnostics" icon={<Magnifier handle="#a8ac86" className="size-[38px]" />} active />
        <NavItem label="Combined Fix" icon={sheetsIcon} />
        <hr className="mt-5 mb-[21px] border-t-2 border-[#858585]" />
        {FIXES.map((label, i) => (
          <NavItem key={label} label={label} icon={<WizardCube kind={FIX_KINDS[i]} />} />
        ))}
        <hr className="mt-[22px] mb-[21px] border-t-2 border-[#858585]" />
        <NavItem label="Profiles" icon={profileIcon} />
      </div>
    </nav>
  );
}

function CheckBox({ id, defaultChecked }: { id: string; defaultChecked?: boolean }) {
  return (
    <span className="relative block size-[26px]">
      <input
        id={id}
        type="checkbox"
        defaultChecked={defaultChecked}
        className="peer block size-[26px] appearance-none rounded-md border-2 border-[#7a7a7a] bg-[#f7f7f7] checked:border-[#0560b8] checked:bg-[#0560b8]"
      />
      <svg viewBox="0 0 26 26" className="pointer-events-none absolute inset-0 hidden size-[26px] peer-checked:block" aria-hidden="true">
        <path d="M7 14L11 18L19 10" fill="none" stroke="#c5def6" strokeWidth="1.600" />
      </svg>
    </span>
  );
}

function GreenTick() {
  return (
    <svg viewBox="0 0 33 32" className="h-8 w-[33px]" aria-hidden="true">
      <path d="M1 6L10 17Q18 7 32 0V4Q20 15 11 31L8 31Q6 18 1 12Z" fill="#1f9748" stroke="#1a6b36" strokeWidth="0.800" />
      <path d="M2 8L10 18L31 2" fill="none" stroke="#17753a" strokeWidth="1" />
    </svg>
  );
}

type Check = { text: string; count?: number; box: "on" | "off" | "none"; sub?: boolean };

const CHECKS: Check[] = [
  { text: "inverted normals detected", count: 0, box: "on" },
  { text: "bad edges detected", count: 0, box: "on" },
  { text: "bad contours detected", count: 0, box: "none", sub: true },
  { text: "near bad edges detected", count: 0, box: "on", sub: true },
  { text: "planar holes detected", count: 0, box: "on", sub: true },
  { text: "shells detected", count: 1, box: "on" },
  { text: "possible noise shells detected", count: 0, box: "none", sub: true },
  { text: "overlapping triangles detected", box: "off" },
  { text: "intersecting triangles detected", box: "off" },
];

function CheckRow({ text, count, box, sub }: Check) {
  const id = text.replace(/ /g, "-");
  return (
    <li className={`flex items-center ${sub ? "pl-[39px]" : ""}`}>
      <span className="w-[38px]">{box !== "none" && <CheckBox id={id} defaultChecked={box === "on"} />}</span>
      <span className="flex w-[41px] items-center">
        {count !== undefined ? <GreenTick /> : <span className="ml-[13px] size-[7px] rounded-full bg-[#2a2ac4]" />}
      </span>
      <b className="w-[87px] text-black">{count}</b>
      {box === "none" ? <span>{text}</span> : <label htmlFor={id}>{text}</label>}
    </li>
  );
}

function WizardBody() {
  const [part, setPart] = useState("AV designe 194 stl 3");
  return (
    <div className="mr-2.5 ml-[17px] min-w-0 flex-1">
      <div className="flex h-[42px] items-start">
        <label htmlFor="part" className="ml-2 w-36 leading-6">Current Part:</label>
        <div className="relative flex-1">
          <select
            id="part"
            value={part}
            onChange={(e) => setPart(e.target.value)}
            className="block h-10 w-full appearance-none rounded-sm border-2 border-[#d2d2d2] border-b-[#b5b5b5] bg-white pl-[5px]"
          >
            <option>AV designe 194 stl 3</option>
          </select>
          <svg viewBox="0 0 18 12" className="pointer-events-none absolute top-3.5 right-2 h-3 w-[18px]" aria-hidden="true">
            <path d="M1 2L9 10L17 2" fill="none" stroke="#666" strokeWidth="1.600" />
          </svg>
        </div>
        <button type="button" disabled className="mt-0.5 ml-3 h-10 w-[83px] rounded-md border-2 border-[#eaeaea] bg-[#f8f8f8] text-[#9a9a9a]">
          Next
        </button>
      </div>
      <div className="mt-[21px] mr-1 rounded-md border-2 border-[#b3b3b3] bg-linear-to-b from-white to-[#f0f0f0] px-[17px] pt-9 pb-5">
        <fieldset className="border-2 border-[#dddddd] pt-3 pr-[18px] pb-[15px] pl-[22px]">
          <legend className="-ml-3 px-1.5 leading-7">Advice</legend>
          <div className="flex justify-between">
            <p className="leading-[26px]">
              No more errors are detected. It seems that the part is ok.
              <br />
              Note that not all parameters were analysed.
            </p>
            <div className="flex h-[91px] w-[31px] flex-col items-center justify-between bg-[#efefef] py-2.5">
              <button type="button" aria-label="Scroll up">
                <svg viewBox="0 0 18 14" className="h-3.5 w-[18px]"><path d="M9 1L17 11Q18 13 16 13H2Q0 13 1 11Z" fill="#a3a3a3" /></svg>
              </button>
              <button type="button" aria-label="Scroll down">
                <svg viewBox="0 0 18 14" className="h-3.5 w-[18px]"><path d="M9 13L17 3Q18 1 16 1H2Q0 1 1 3Z" fill="#a3a3a3" /></svg>
              </button>
            </div>
          </div>
        </fieldset>
        <fieldset className="mt-2.5 border-2 border-[#dddddd] pt-3.5 pr-[17px] pb-[15px] pl-[18px]">
          <legend className="-ml-2 px-1.5 leading-7">Diagnostics</legend>
          <div className="flex h-[26px] items-center gap-1.5">
            <CheckBox id="full-analysis" />
            <label htmlFor="full-analysis">Full Analysis</label>
          </div>
          <ul className="mt-[26px] ml-10 grid h-[356px] auto-rows-fr">
            {CHECKS.map((c) => <CheckRow key={c.text} {...c} />)}
          </ul>
          <div className="mt-5 flex justify-end">
            <button type="button" className="h-[47px] w-[195px] rounded-lg border-2 border-[#2b7dbb] bg-white p-1">
              <span className="flex h-full items-center border-2 border-dotted border-[#333]">
                <Magnifier handle="#e6ac4a" className="size-[37px]" />
                <span className="flex-1 pr-1 text-center">Update</span>
              </span>
            </button>
          </div>
        </fieldset>
      </div>
    </div>
  );
}

function FixWizard() {
  return (
    <section className="flex min-w-0 flex-[967_1_0%] flex-col overflow-hidden rounded-t-xl rounded-b-sm bg-[#f0f0f0] font-['Open_Sans',sans-serif] text-xl text-[#1a1a1a]">
      <header className="flex h-[60px] shrink-0 items-center bg-[#eef3fb] pr-[33px] pl-[18px]">
        <svg viewBox="0 0 28 28" className="size-7" aria-hidden="true">
          <path d="M10 1H19V9H27V18H19V27H10V19H1V10H10Z" fill="#f20d0d" stroke="#b90808" strokeWidth="1.200" />
        </svg>
        <h1 className="ml-[11px] flex-1 text-[23px] whitespace-nowrap">Fix Wizard (Part: AV designe 194 stl 3) &gt; Diagnostics</h1>
        <div className="flex items-center gap-[69px]">
          <button type="button" aria-label="Minimize">
            <svg viewBox="0 0 21 21" className="size-[21px]"><path d="M0 10.500H21" stroke="#111" strokeWidth="2" /></svg>
          </button>
          <button type="button" aria-label="Maximize" disabled>
            <svg viewBox="0 0 21 21" className="size-[21px]"><rect x="1" y="1" width="19" height="19" rx="2" fill="none" stroke="#c3c8d1" strokeWidth="1.800" /></svg>
          </button>
          <button type="button" aria-label="Close">
            <svg viewBox="0 0 21 21" className="size-[21px]"><path d="M1 1L20 20M20 1L1 20" stroke="#111" strokeWidth="2" /></svg>
          </button>
        </div>
      </header>
      <div className="flex flex-1 pt-[9px] pl-2">
        <WizardNav />
        <WizardBody />
      </div>
    </section>
  );
}

export default function App() {
  return (
    <div className="relative flex min-h-screen gap-[42px] bg-[#1c2228] bg-[radial-gradient(ellipse_50%_60%_at_57%_92%,#1b1d35,transparent)] pt-[88px] pr-[76px] pb-[53px] pl-[76px]">
      <div className="absolute top-0 left-0 h-1.5 w-12 bg-[#b4c4e6]" />
      <MagicsWindow />
      <FixWizard />
    </div>
  );
}
